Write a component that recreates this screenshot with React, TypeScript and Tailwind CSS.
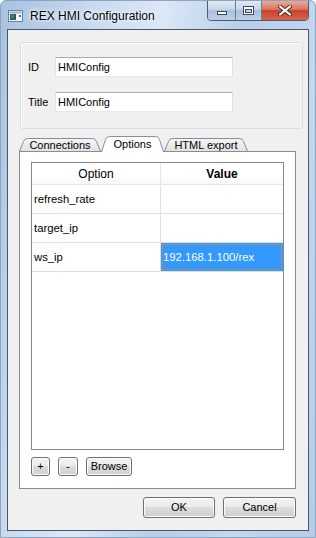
import React from "react";

function WinButton({ children, w, h = 21 }: { children: React.ReactNode; w: number; h?: number }) {
  return (
    <div
      className="flex items-center justify-center rounded-[3px] border border-[#707070] bg-[linear-gradient(180deg,#f2f2f2_0%,#ebebeb_49%,#dddddd_50%,#cfcfcf_100%)] shadow-[inset_0_0_0_1px_#fcfcfc] text-[11px] text-black leading-none"
      style={{ width: w, height: h }}
    >
      {children}
    </div>
  );
}

function Tab({ label, width, selected }: { label: string; width: number; selected?: boolean }) {
  const h = selected ? 16 : 13;
  const path = `M0.5,${h} L4.5,3.5 Q5.5,0.5 8.5,0.5 L${width - 8.5},0.5 Q${width - 5.5},0.5 ${width - 4.5},3.5 L${width - 0.5},${h}`;
  return (
    <div
      className={`relative flex items-center justify-center ${selected ? "z-10 -mb-px" : ""}`}
      style={{ width, height: h }}
    >
      <svg className="absolute inset-0" width={width} height={h}>
        <defs>
          <linearGradient id="tabg" x1="0" y1="0" x2="0" y2="1">
            <stop offset="0" stopColor="#f6f6f6" />
            <stop offset="1" stopColor="#e2e2e2" />
          </linearGradient>
        </defs>
        <path d={path + " Z"} fill={selected ? "#ffffff" : "url(#tabg)"} stroke="none" />
        <path d={path} fill="none" stroke="#898c95" strokeWidth="1" />
      </svg>
      <span className={`relative text-[11px] leading-none ${selected ? "pt-[1px]" : "pt-[2px]"}`}>{label}</span>
    </div>
  );
}

function TextBox({ value }: { value: string }) {
  return (
    <div className="w-[178px] h-[20px] bg-white border border-[#e3e9ef] border-t-[#abadb3] border-l-[#e2e3ea] border-r-[#dbdfe6] flex items-center pl-[2px] text-[11px]">
      {value}
    </div>
  );
}

export default function App() {
  const rows = [
    { k: "refresh_rate", v: "" },
    { k: "target_ip", v: "" },
    { k: "ws_ip", v: "192.168.1.100/rex", sel: true },
  ];
  return (
    <div className="w-[316px] h-[538px] overflow-hidden flex flex-col font-['Liberation_Sans',Arial,sans-serif] text-black bg-[linear-gradient(100deg,#a7c2e2_0%,#c9dcf1_25%,#dbe8f6_40%,#b7cee9_60%,#c3d7ee_80%,#b5cce8_100%)] rounded-t-[6px] border border-[#8fa3bb]">
      {/* title bar */}
      <div className="h-[28px] flex items-start shrink-0">
        <svg className="ml-[7px] mt-[9px]" width="15" height="12" viewBox="0 0 15 12">
          <rect x="0.5" y="0.5" width="14" height="11" fill="#f4f6f8" stroke="#6f7f8f" />
          <rect x="1.5" y="1.5" width="12" height="2" fill="#9fb3c8" />
          <rect x="2" y="4" width="6" height="6" fill="#2a5a6a" />
          <rect x="3" y="5" width="3" height="3" fill="#3f8a6a" />
          <rect x="11" y="5" width="2" height="2" fill="#3a6fc0" />
        </svg>
        <span className="ml-[7px] mt-[8px] text-[12px] leading-[14px] text-black [text-shadow:0_0_6px_#ffffff,0_0_3px_#ffffff]">
          REX HMI Configuration
        </span>
        <div className="ml-auto mr-[6px] -mt-px flex h-[21px]">
          <div className="flex rounded-b-[4px] border border-[#4a5a70] overflow-hidden">
            <div className="w-[28px] h-full flex items-center justify-center bg-[linear-gradient(180deg,#dfe9f5_0%,#c4d5ea_45%,#a9bfdb_50%,#bcd0e8_100%)] border-r border-[#6a7d95]">
              <div className="w-[10px] h-[4px] bg-white border border-[#3d4a5c] mt-[5px]" />
            </div>
            <div className="w-[26px] h-full flex items-center justify-center bg-[linear-gradient(180deg,#dfe9f5_0%,#c4d5ea_45%,#a9bfdb_50%,#bcd0e8_100%)] border-r border-[#6a7d95]">
              <div className="w-[11px] h-[9px] border border-[#3d4a5c] bg-white flex items-center justify-center">
                <div className="w-[7px] h-[4px] border border-[#3d4a5c] bg-[#c9d7e8]" />
              </div>
            </div>
            <div className="w-[46px] h-full flex items-center justify-center bg-[linear-gradient(180deg,#e9a99c_0%,#d9745f_45%,#c7432b_50%,#d7654a_100%)]">
              <svg width="14" height="11" viewBox="0 0 14 11">
                <path d="M2 1.5 L12 9.5 M12 1.5 L2 9.5" stroke="#4a2a22" strokeWidth="4" strokeLinecap="round" />
                <path d="M2 1.5 L12 9.5 M12 1.5 L2 9.5" stroke="#ffffff" strokeWidth="2.2" strokeLinecap="round" />
              </svg>
            </div>
          </div>
        </div>
      </div>

      {/* client area */}
      <div className="mx-[6px] h-[502px] border border-[#4c5868] bg-[#f0f0f0] flex flex-col shrink-0">
        {/* group box */}
        <div className="ml-[12px] mt-[12px] w-[283px] h-[87px] rounded-[3px] border border-[#d5dfe5] shadow-[inset_1px_1px_0_#ffffff] flex flex-col pl-[7px] pt-[14px] shrink-0">
          <div className="flex items-center">
            <span className="w-[27px] text-[11px]">ID</span>
            <TextBox value="HMIConfig" />
          </div>
          <div className="flex items-center mt-[15px]">
            <span className="w-[27px] text-[11px]">Title</span>
            <TextBox value="HMIConfig" />
          </div>
        </div>

        {/* tabs */}
        <div className="ml-[11px] mt-[7px] h-[15px] flex items-end shrink-0">
          <Tab label="Connections" width={82} />
          <Tab label="Options" width={63} selected />
          <Tab label="HTML export" width={84} />
        </div>
        <div className="ml-[11px] w-[277px] h-[338px] border border-[#898c95] bg-white flex flex-col shrink-0">
          <div className="ml-[11px] mt-[10px] w-[253px] h-[288px] border border-[#828790] bg-white flex flex-col">
            <div className="flex h-[22px] border-b border-[#e5e5e5] bg-[linear-gradient(180deg,#ffffff_0%,#ffffff_60%,#f7f8fa_100%)]">
              <div className="w-[129px] flex items-center justify-center text-[12px] border-r border-[#e5e5e5]">Option</div>
              <div className="flex-1 flex items-center justify-center text-[12px] font-bold">Value</div>
            </div>
            {rows.map((r) => (
              <div key={r.k} className="flex h-[29px] border-b border-[#e0e0e0]">
                <div className="w-[129px] flex items-center pl-[2px] text-[11.3px] border-r border-[#e0e0e0]">{r.k}</div>
                {r.sel ? (
                  <div className="flex-1 flex bg-[#3399ff]">
                    <div className="flex-1 m-[1px] border border-dotted border-[#e8901c] flex items-center text-[11.3px] text-white">
                      {r.v}
                    </div>
                  </div>
                ) : (
                  <div className="flex-1" />
                )}
              </div>
            ))}
          </div>
          <div className="ml-[11px] mt-[7px] flex gap-[8px]">
            <WinButton w={19} h={19}>+</WinButton>
            <WinButton w={20} h={19}>-</WinButton>
            <WinButton w={46} h={19}>Browse</WinButton>
          </div>
        </div>

        {/* dialog buttons */}
        <div className="mt-[8px] mr-[12px] flex justify-end gap-[8px]">
          <WinButton w={72}>OK</WinButton>
          <WinButton w={73}>Cancel</WinButton>
        </div>
      </div>
    </div>
  );
}
